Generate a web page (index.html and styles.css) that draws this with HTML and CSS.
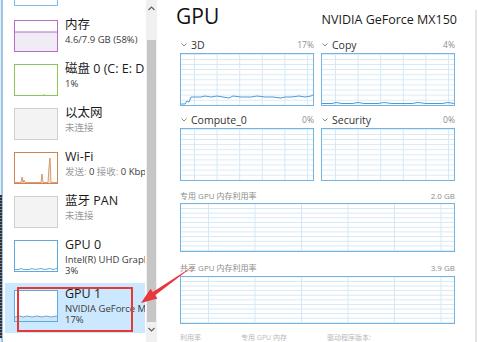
FILE: index.html
```html
<!DOCTYPE html>
<html>
<head>
	<meta charset="utf-8">
	<title>任务管理器 - GPU</title>
	<link rel="stylesheet" href="styles.css">
</head>
<body>
	<div class="window">
		<div class="edge"></div>

		<div class="sidebar">
			<div class="cut"></div>

			<div class="item">
				<div class="thumb mem">
					<svg viewBox="0 0 42 30" preserveAspectRatio="none"><path d="M0 11 H42 V30 H0 Z" fill="#efecf3"/><path d="M0 11 H42" stroke="#b46bcc" stroke-width="1" fill="none"/></svg>
				</div>
				<div class="info">
					<div class="name">内存</div>
					<div class="sub dark">4.6/7.9 GB (58%)</div>
				</div>
			</div>

			<div class="item">
				<div class="thumb disk">
					<svg viewBox="0 0 42 30" preserveAspectRatio="none"><path d="M29 30 V29" stroke="#88c55a" fill="none"/></svg>
				</div>
				<div class="info">
					<div class="name">磁盘 0 (C: E: D:)</div>
					<div class="sub dark">1%</div>
				</div>
			</div>

			<div class="item">
				<div class="thumb off"></div>
				<div class="info">
					<div class="name">以太网</div>
					<div class="sub">未连接</div>
				</div>
			</div>

			<div class="item">
				<div class="thumb wifi">
					<svg viewBox="0 0 42 30" preserveAspectRatio="none"><path d="M0 30 L6 30 L7 24 L8 30 L9 27 L10 30 L26 30 L27 21 L28 30 L33 30 L34 14 L35 5 L36 30 L42 30 Z" fill="#f6e4d6"/><polyline points="0,29.5 6,29.5 7,24 8,29.5 9,27 10,29.5 26,29.5 27,21 28,29.5 33,29.5 34,14 35,5 36,29.5 42,29.5" fill="none" stroke="#cf8550" stroke-width="0.8"/></svg>
				</div>
				<div class="info">
					<div class="name">Wi-Fi</div>
					<div class="sub">发送: <span class="dark">0</span> 接收: <span class="dark">0 Kbps</span></div>
				</div>
			</div>

			<div class="item">
				<div class="thumb off"></div>
				<div class="info">
					<div class="name">蓝牙 PAN</div>
					<div class="sub">未连接</div>
				</div>
			</div>

			<div class="item">
				<div class="thumb gpu">
					<svg viewBox="0 0 42 30" preserveAspectRatio="none"><polyline points="0,28.5 4,28.5 6,27.5 9,28.5 14,28.5 17,27.5 20,28.5 26,27.5 30,28.5 35,27.5 38,28.5 42,27.5" fill="none" stroke="#3f95d4" stroke-width="0.8"/></svg>
				</div>
				<div class="info">
					<div class="name">GPU 0</div>
					<div class="sub dark">Intel(R) UHD Graphics 620</div>
					<div class="sub dark">3%</div>
				</div>
			</div>

			<div class="item sel">
				<div class="thumb gpu">
					<svg viewBox="0 0 42 30" preserveAspectRatio="none"><path d="M0 26 L5 25 L8 26 L12 25 L17 26 L22 25 L27 26 L31 25 L36 26 L42 25 L42 30 L0 30 Z" fill="#cfe6f7"/><polyline points="0,26 5,25 8,26 12,25 17,26 22,25 27,26 31,25 36,26 42,25" fill="none" stroke="#3f95d4" stroke-width="0.8"/></svg>
				</div>
				<div class="info">
					<div class="name">GPU 1</div>
					<div class="sub dark">NVIDIA GeForce MX150</div>
					<div class="sub dark">17%</div>
				</div>
				<div class="mark"></div>
			</div>
		</div>

		<div class="sbar">
			<div class="sbar-up">
				<svg width="7" height="5" viewBox="0 0 7 5"><path d="M0.5 4 L3.5 1 L6.5 4" fill="none" stroke="#606060" stroke-width="1.2"/></svg>
			</div>
			<div class="sbar-gap"></div>
			<div class="sbar-thumb"></div>
			<div class="sbar-down">
				<svg width="7" height="5" viewBox="0 0 7 5"><path d="M0.5 1 L3.5 4 L6.5 1" fill="none" stroke="#606060" stroke-width="1.2"/></svg>
			</div>
		</div>

		<div class="detail">
			<div class="head">
				<div class="title">GPU</div>
				<div class="model">NVIDIA GeForce MX150</div>
			</div>

			<div class="engines">
				<div class="engine">
					<div class="label"><svg class="chev" width="6" height="4" viewBox="0 0 6 4"><path d="M0.5 0.5 L3 3 L5.5 0.5" fill="none" stroke="#8a8a8a"/></svg><span class="lname">3D</span><span class="pct">17%</span></div>
					<div class="chart small">
						<svg viewBox="0 0 132 51" preserveAspectRatio="none"><polyline points="0,50 4,50 6,47 8,48 10,43 20,43 24,42 30,43 36,42 42,43 48,44 52,42 60,43 70,43 76,42 84,43 92,43 100,44 104,43 110,43 118,42 124,43 130,42 132,41" fill="none" stroke="#4a9bd6" stroke-width="1"/></svg>
					</div>
				</div>
				<div class="engine">
					<div class="label"><svg class="chev" width="6" height="4" viewBox="0 0 6 4"><path d="M0.5 0.5 L3 3 L5.5 0.5" fill="none" stroke="#8a8a8a"/></svg><span class="lname">Copy</span><span class="pct">4%</span></div>
					<div class="chart small">
						<svg viewBox="0 0 132 51" preserveAspectRatio="none"><polyline points="0,49.5 10,49.5 14,48.5 20,49.5 30,49.5 36,48.5 42,49.5 56,49.5 62,48.5 70,49.5 90,49.5 96,48.5 104,49.5 120,49.5 126,48.5 132,49.5" fill="none" stroke="#4a9bd6" stroke-width="1"/></svg>
					</div>
				</div>
				<div class="engine">
					<div class="label"><svg class="chev" width="6" height="4" viewBox="0 0 6 4"><path d="M0.5 0.5 L3 3 L5.5 0.5" fill="none" stroke="#8a8a8a"/></svg><span class="lname">Compute_0</span><span class="pct">0%</span></div>
					<div class="chart small"></div>
				</div>
				<div class="engine">
					<div class="label"><svg class="chev" width="6" height="4" viewBox="0 0 6 4"><path d="M0.5 0.5 L3 3 L5.5 0.5" fill="none" stroke="#8a8a8a"/></svg><span class="lname">Security</span><span class="pct">0%</span></div>
					<div class="chart small"></div>
				</div>
			</div>

			<div class="memlabel"><span>专用 GPU 内存利用率</span><span>2.0 GB</span></div>
			<div class="chart wide"></div>

			<div class="memlabel"><span>共享 GPU 内存利用率</span><span>3.9 GB</span></div>
			<div class="chart wide"></div>

			<div class="foot"><span>利用率</span><span>专用 GPU 内存</span><span>驱动程序版本:</span></div>
		</div>

		<div class="vbar"></div>

		<svg class="arrow" width="478" height="342" viewBox="0 0 478 342">
			<path d="M194 265.5 L155.2 295.3 L157.5 298.6 L141 303 L150.5 288.8 L152.8 292.1 Z" fill="#e8383d"/>
		</svg>
	</div>
</body>
</html>
```

FILE: styles.css
```css
* { margin: 0; padding: 0; box-sizing: border-box; }
body { background: #fff; overflow: hidden; font-family: "Open Sans", "Noto Sans CJK SC", sans-serif; color: #1e1e1e; }

.window { position: relative; width: 478px; height: 342px; display: flex; overflow: hidden; background: #fff; }

/* left edge of the screenshot */
.edge { width: 3px; display: flex; flex-direction: column; background: linear-gradient(to right, #e4edf5 0 1px, #9ec5e4 1px 3px); }
.edge::before { content: ""; display: block; width: 2px; height: 143px; margin-top: 195px; background: repeating-linear-gradient(to bottom, #2b303a 0 2px, #7d838d 2px 3px); }

/* resource list */
.sidebar { width: 143px; display: flex; flex-direction: column; overflow: hidden; }
.cut { width: 44px; height: 6px; margin: 0 0 9px 11px; border: 1px solid #7fbbe6; border-top: none; background: #fff; }
.item { position: relative; display: flex; align-items: flex-start; height: 44px; width: 140px; margin-left: 2px; padding-left: 9px; }
.thumb { flex: none; width: 44px; height: 32px; margin-top: 5px; border: 1px solid #ccc; background: #fff; }
.thumb svg { display: block; width: 42px; height: 30px; }
.thumb.mem { border-color: #b46bcc; }
.thumb.disk { border-color: #88c55a; }
.thumb.off { border-color: #cfcfcf; background: #f3f3f3; }
.thumb.wifi { border-color: #cf8550; }
.thumb.gpu { border-color: #5ea9de; }

.info { min-width: 0; margin-left: 7px; padding-top: 2px; white-space: nowrap; overflow: hidden; }
.name { font-size: 12.5px; line-height: 15px; color: #1b1b1b; }
.sub { font-size: 9.5px; line-height: 11.5px; color: #9a9a9a; }
.name + .sub { margin-top: 1.5px; }
.dark { color: #3a3a3a; }

.item.sel { height: 50px; margin-top: 4px; background: #cce8ff; }
.item.sel .thumb { margin-top: 7px; }
.item.sel .info { padding-top: 3px; }
.mark { position: absolute; left: 12px; top: 4px; width: 116px; height: 45px; border: 2px solid #e53935; }

/* list scrollbar */
.sbar { width: 11px; margin-right: 3px; display: flex; flex-direction: column; background: #f0f0f0; }
.sbar-up { height: 17px; display: flex; justify-content: center; padding-top: 6px; }
.sbar-gap { height: 23px; }
.sbar-thumb { height: 282px; margin: 0 1px; background: #c6c6c6; }
.sbar-down { flex: 1; display: flex; justify-content: center; padding-top: 5px; }
.sbar svg { display: block; }

/* detail pane */
.detail { width: 315px; padding: 0 20px 0 20px; display: flex; flex-direction: column; }
.head { height: 37px; padding-top: 3px; display: flex; justify-content: space-between; align-items: baseline; }
.title { font-size: 21px; line-height: 27px; color: #111; margin-left: -4px; }
.model { font-size: 12.5px; line-height: 18px; color: #1b1b1b; margin-right: -2px; }

.engines { display: grid; grid-template-columns: 1fr 1fr; column-gap: 7px; row-gap: 6px; }
.label { height: 16px; display: flex; align-items: center; }
.chev { flex: none; margin: 0 4px 0 1px; }
.lname { font-size: 10.5px; color: #333; }
.pct { margin-left: auto; font-size: 8.5px; color: #8c8c8c; }

.chart { border: 1px solid #74b4e2; background-color: #fff; }
.chart svg { display: block; width: 100%; height: 100%; }
.chart.small { height: 53px;
	background-image: linear-gradient(to right, #d4e8f6 1px, transparent 1px), linear-gradient(to bottom, #d4e8f6 1px, transparent 1px);
	background-size: 22.6px 100%, 100% 10%;
	background-position: 13px 0, 0 5px; }
.chart.wide { height: 49px;
	background-image: linear-gradient(to right, #d4e8f6 1px, transparent 1px), linear-gradient(to bottom, #d4e8f6 1px, transparent 1px);
	background-size: 46.5px 100%, 100% 10%;
	background-position: 27px 0, 0 4px; }

.memlabel { height: 16px; margin-top: 7px; display: flex; justify-content: space-between; align-items: center; font-size: 8px; color: #8c8c8c; }
.memlabel + .chart { margin-bottom: 1px; }
.foot { margin-top: 7px; display: flex; gap: 40px; font-size: 7px; color: #b8b8b8; }

.vbar { width: 2px; margin: 10px 1px 0 0; background: #e4e4e4; }

/* red annotation arrow */
.arrow { position: absolute; left: 0; top: 0; pointer-events: none; }
```
